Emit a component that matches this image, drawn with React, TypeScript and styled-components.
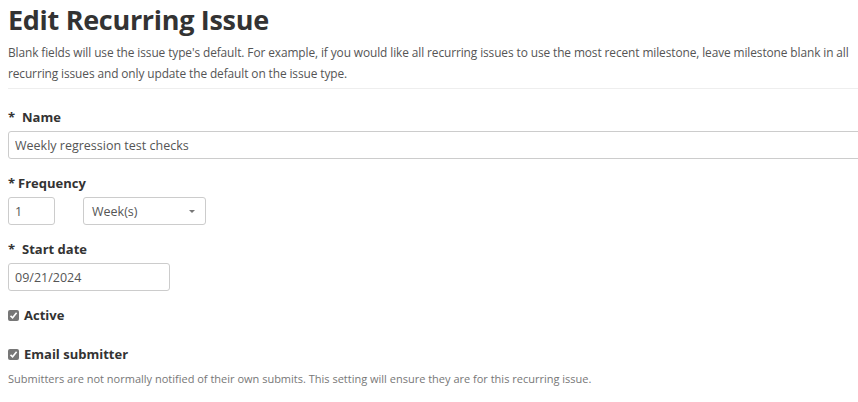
import styled, { createGlobalStyle } from 'styled-components';

const GlobalStyle = createGlobalStyle`
  body {
    margin: 0;
    background: #fff;
    font-family: "Open Sans", "Noto Sans", sans-serif;
    color: #333;
  }
`;

export default function App() {
  return <Page>
    <GlobalStyle />
    <Title>Edit Recurring Issue</Title>
    <Intro>
      Blank fields will use the issue type's default. For example, if you would like all recurring issues to use the most recent milestone, leave milestone blank in all recurring issues and only update the default on the issue type.
    </Intro>
    <Divider />

    <Group>
      <Label><Required $wide>*</Required>Name</Label>
      <TextInput $width="100%" $bleed defaultValue="Weekly regression test checks" />
    </Group>

    <Group>
      <Label><Required>*</Required>Frequency</Label>
      <Row>
        <TextInput $width="47px" defaultValue="1" />
        <Select>
          <span>Week(s)</span>
          <Caret />
        </Select>
      </Row>
    </Group>

    <Group>
      <Label><Required $wide>*</Required>Start date</Label>
      <TextInput $width="162px" defaultValue="09/21/2024" />
    </Group>

    <CheckRow>
      <Box><Tick /></Box>
      Active
    </CheckRow>

    <CheckRow $last>
      <Box><Tick /></Box>
      Email submitter
    </CheckRow>
    <Help>Submitters are not normally notified of their own submits. This setting will ensure they are for this recurring issue.</Help>
  </Page>;
}

function Tick() {
  return <svg width="9" height="9" viewBox="0 0 9 9">
    <path d="M1.5 4.8 L3.6 6.8 L7.6 1.8" fill="none" stroke="#fff" strokeWidth="1.6" />
  </svg>;
}

const Page = styled.div`
  padding: 0 0 0 8px;
  overflow: hidden;
`;

const Title = styled.h1`
  margin: 0;
  padding-top: 2px;
  font-size: 27px;
  line-height: 36px;
  font-weight: 700;
  color: #333;
  letter-spacing: -0.3px;
`;

const Intro = styled.p`
  margin: 4px 0 0;
  font-size: 11.9px;
  letter-spacing: -0.1px;
  line-height: 21px;
  color: #555;
`;

const Divider = styled.hr`
  margin: 4px 0 19px;
  border: none;
  border-top: 1px solid #eee;
`;

const Group = styled.div`
  margin-bottom: 15px;
`;

const Label = styled.label`
  display: block;
  font-size: 13px;
  font-weight: 700;
  line-height: 18px;
  margin-bottom: 5px;
  color: #333;
`;

const Required = styled.span<{ $wide?: boolean }>`
  display: inline-block;
  width: ${p => p.$wide ? '14px' : '10px'};
  font-weight: 700;
`;

const TextInput = styled.input<{ $width: string; $bleed?: boolean }>`
  display: block;
  box-sizing: border-box;
  width: ${p => p.$width};
  ${p => p.$bleed && 'margin-right: -10px; width: calc(100% + 10px);'}
  height: 28px;
  padding: 0 6px;
  border: 1px solid #ccc;
  border-radius: 3px;
  font-family: inherit;
  font-size: 12.5px;
  color: #555;
  outline: none;
`;

const Row = styled.div`
  display: flex;
  gap: 28px;
`;

const Select = styled.div`
  box-sizing: border-box;
  width: 123px;
  height: 28px;
  padding: 0 10px 0 8px;
  border: 1px solid #ccc;
  border-radius: 3px;
  display: flex;
  align-items: center;
  justify-content: space-between;
  font-size: 12.5px;
  color: #555;
`;

const Caret = styled.span`
  width: 0;
  height: 0;
  border-left: 3px solid transparent;
  border-right: 3px solid transparent;
  border-top: 3px solid #777;
`;

const CheckRow = styled.label<{ $last?: boolean }>`
  display: flex;
  align-items: center;
  gap: 5px;
  font-size: 13px;
  font-weight: 700;
  line-height: 18px;
  margin-top: ${p => p.$last ? '0' : '1px'};
  margin-bottom: ${p => p.$last ? '8px' : '21px'};
  color: #333;
`;

const Box = styled.span`
  width: 11px;
  height: 11px;
  border-radius: 2px;
  background: #777;
  display: flex;
  align-items: center;
  justify-content: center;
`;

const Help = styled.p`
  margin: 0;
  font-size: 11px;
  line-height: 16px;
  color: #777;
`;
